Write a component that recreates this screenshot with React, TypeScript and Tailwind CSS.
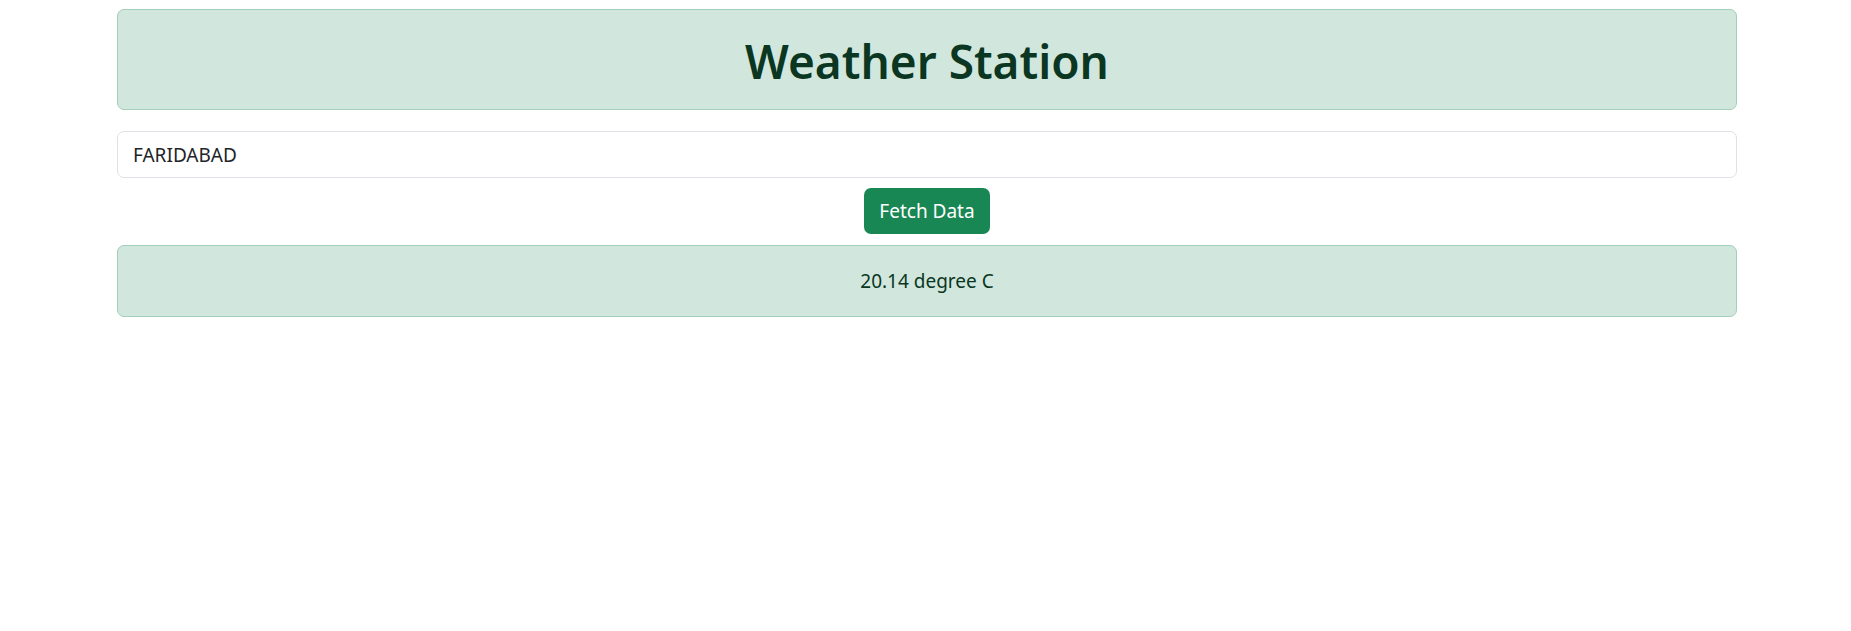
export default function App() {
  return (
    <div className="min-h-[631px] bg-white">
      <div className="ml-[117px] w-[1620px] pt-[9px] flex flex-col font-['Noto_Sans',sans-serif]">
        <div className="rounded-[7px] border border-[#a3cfbb] bg-[#d1e7dd] h-[101px] flex items-center justify-center">
          <h1 className="text-[46px] leading-none font-semibold text-[#0a3622] pt-[2px]">Weather Station</h1>
        </div>
        <input
          className="mt-[21px] h-[47px] rounded-[7px] border border-[#dee2e6] bg-white px-[15px] text-[19px] text-[#212529] outline-none"
          defaultValue="FARIDABAD"
        />
        <div className="mt-[10px] flex justify-center">
          <button className="h-[46px] w-[126px] rounded-[7px] bg-[#198754] text-[19px] text-white">Fetch Data</button>
        </div>
        <div className="mt-[11px] rounded-[7px] border border-[#a3cfbb] bg-[#d1e7dd] h-[72px] flex items-center justify-center text-[19px] text-[#0a3622]">
          20.14 degree C
        </div>
      </div>
    </div>
  );
}
